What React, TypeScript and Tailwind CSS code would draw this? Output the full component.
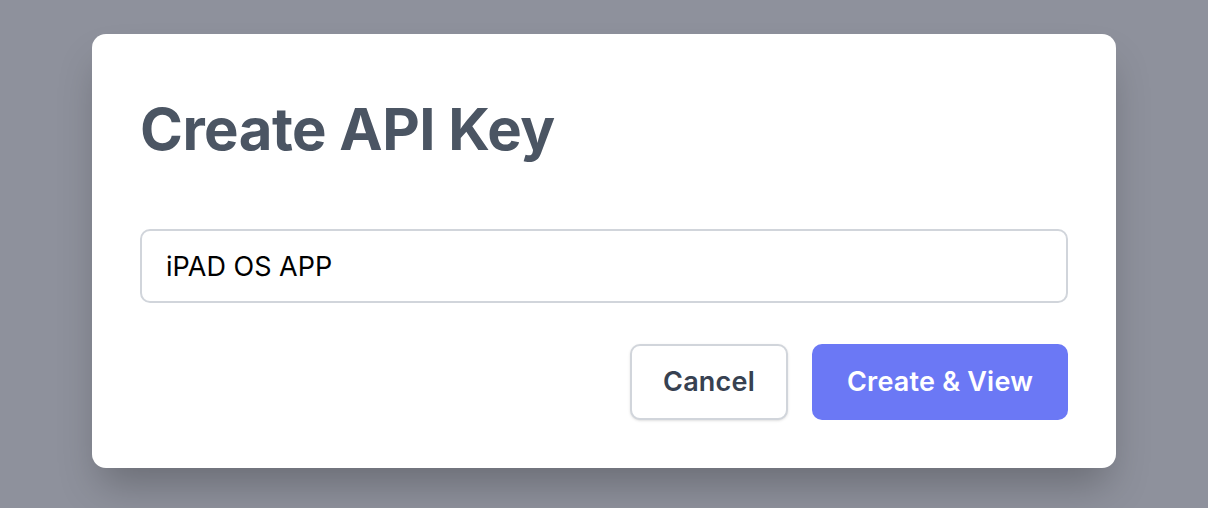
import { useState } from "react";

export default function App() {
  const [name, setName] = useState("iPAD OS APP");

  return (
    <div
      className="flex h-screen w-full items-center justify-center bg-[#8e919c]"
      style={{ fontFamily: "Inter, 'Noto Sans', sans-serif" }}
    >
      <div className="mb-[6px] w-[1024px] rounded-[14px] bg-white px-12 pt-[60px] pb-12 shadow-[0_24px_40px_-8px_rgba(0,0,0,0.25)]">
        <h2 className="text-[58px] leading-[70px] font-bold tracking-[-0.5px] text-[#4b5563]">
          Create API Key
        </h2>

        <input
          type="text"
          value={name}
          onChange={(e) => setName(e.target.value)}
          className="mt-[65px] block h-[74px] w-full rounded-[10px] border-2 border-[#d1d5db] px-6 text-[27px] text-black outline-none"
        />

        <div className="mt-[41px] flex justify-end gap-6">
          <button
            type="button"
            className="h-[76px] w-[158px] rounded-[10px] border-2 border-[#d1d5db] bg-white text-[27px] font-semibold tracking-[0.2px] text-[#374151] shadow-sm"
          >
            Cancel
          </button>
          <button
            type="button"
            className="h-[76px] w-[256px] rounded-[10px] bg-[#6b78f5] text-[27px] font-semibold tracking-[0.2px] text-white"
          >
            Create &amp; View
          </button>
        </div>
      </div>
    </div>
  );
}
